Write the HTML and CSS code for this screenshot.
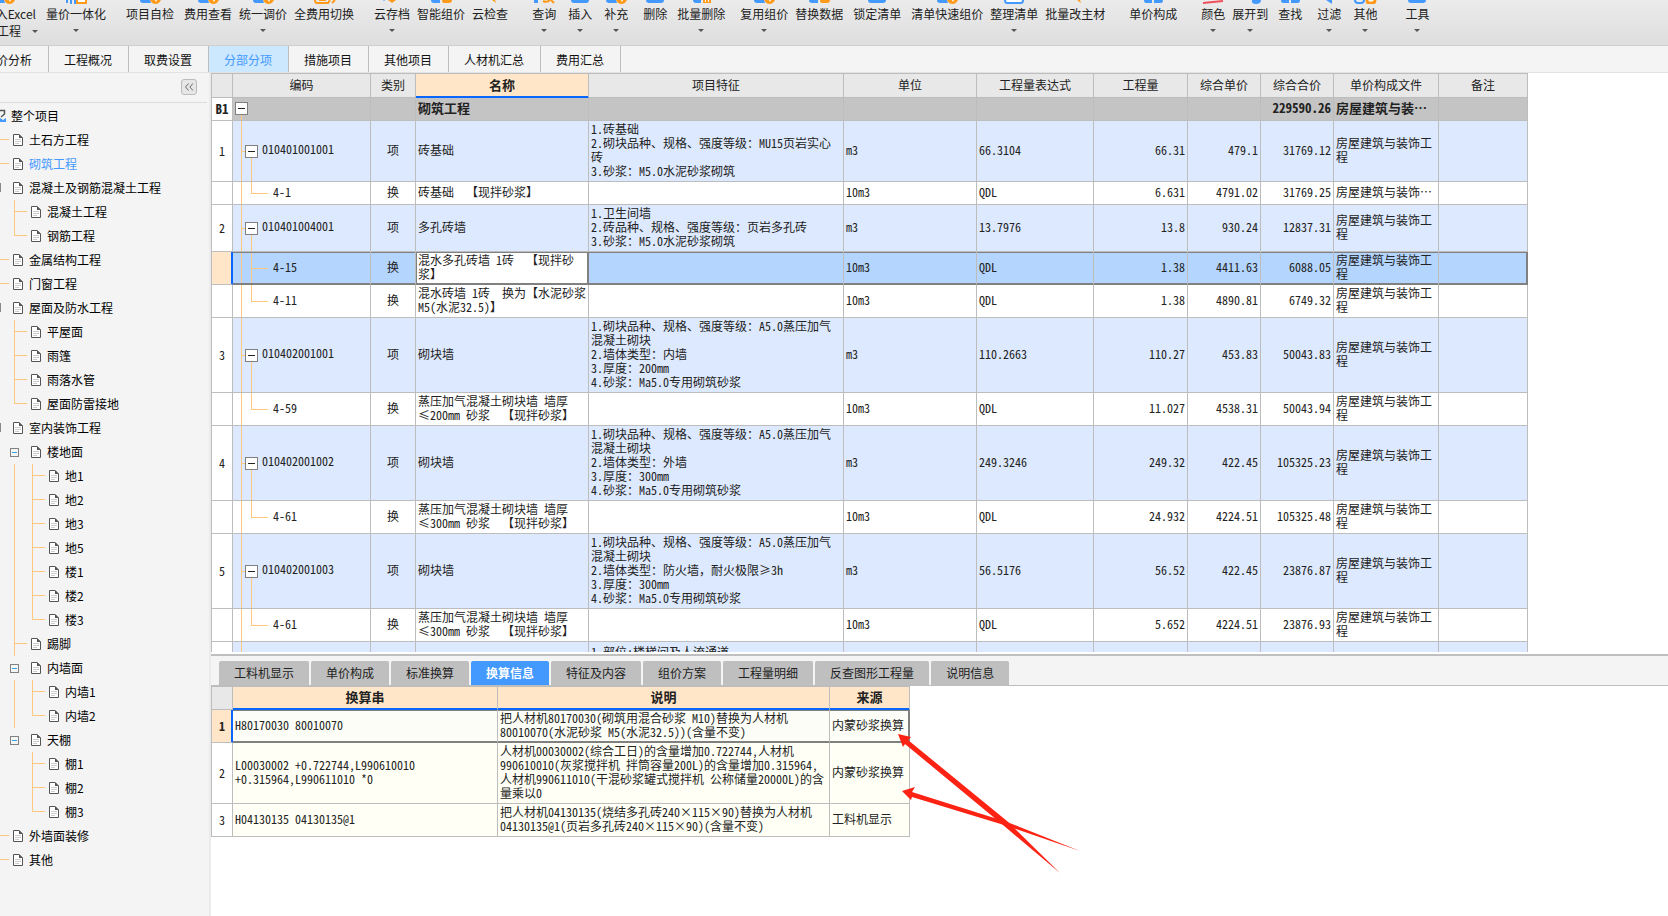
FILE: index.html
```html
<!DOCTYPE html>
<html lang="zh-CN">
<head>
<meta charset="utf-8">
<title>分部分项</title>
<link rel="stylesheet" href="styles.css">
</head>
<body>
<svg class="defs" aria-hidden="true">
  <symbol id="i-doc" viewBox="0 0 10 12"><path d="M.5.5H6L9.500 4V11.500H.5Z" fill="#fff" stroke="#555"/><path d="M6 0L10 4H6Z" fill="#555"/><path d="M2 5.500H8M2 7.500H8M2 9.500H6" stroke="#ccc"/></symbol>
  <symbol id="t-check" viewBox="0 0 24 4"><path d="M2 0H12L13 3H5Q2 3 2 0Z" fill="#4499ff"/><path d="M12 0H23Q21 4 17.500 4T12 0Z" fill="#ff9a1a"/><path d="M17 0H19L18 2Z" fill="#fff"/></symbol>
  <symbol id="t-link" viewBox="0 0 24 4"><path d="M2 0H4V3H2ZM6 0H8V4H6ZM10 0H12V4H10Z" fill="#4499ff"/><path d="M13 0V3H22V0" fill="#fff" stroke="#ff9a1a" stroke-width="2"/></symbol>
  <symbol id="t-swap" viewBox="0 0 24 4"><path d="M3 0Q3 3 5 3H16L18 0" fill="none" stroke="#ff9a1a" stroke-width="2"/><path d="M7 0H14" stroke="#ff9a1a" stroke-width="2"/><path d="M20 3L23 0" stroke="#ff9a1a" stroke-width="2"/></symbol>
  <symbol id="t-cloud" viewBox="0 0 24 4"><path d="M8 0H16L12 3Z" fill="#ff9a1a"/><path d="M3 0H5" stroke="#4499ff"/></symbol>
  <symbol id="t-pair" viewBox="0 0 24 4"><path d="M2 0H11V3H5Q2 3 2 0Z" fill="#4499ff"/><path d="M13 0H23Q23 3 20 3H15Q13 3 13 0Z" fill="#ff9a1a"/></symbol>
  <symbol id="t-spark" viewBox="0 0 24 4"><path d="M14 0H17L18 3Z" fill="#ff9a1a"/></symbol>
  <symbol id="t-find" viewBox="0 0 24 4"><path d="M2 0H6V3H2Z" fill="#4499ff"/><path d="M11 1Q15 3 18 0M19 0L22 3" fill="none" stroke="#ff9a1a" stroke-width="2"/></symbol>
  <symbol id="t-blue" viewBox="0 0 24 4"><path d="M3 0H21Q21 3 18 3H6Q3 3 3 0Z" fill="#4499ff"/></symbol>
  <symbol id="t-trash" viewBox="0 0 24 4"><path d="M4 0H12V3H7Q4 3 4 0Z" fill="#4499ff"/><path d="M14 0H22V3H14Z" fill="#ff9a1a"/><path d="M16.500 0V2M19.500 0V2" stroke="#fff"/></symbol>
  <symbol id="t-box" viewBox="0 0 24 4"><path d="M3 0Q3 3 5 3H19Q21 3 21 0" fill="#fff" stroke="#4499ff" stroke-width="2"/></symbol>
  <symbol id="t-two" viewBox="0 0 24 4"><path d="M3 0H11V3H5Q3 3 3 0ZM13 0H22Q22 3 20 3H13Z" fill="#4499ff"/></symbol>
  <symbol id="t-color" viewBox="0 0 24 4"><path d="M2 3L22 1" stroke="#f0505a" stroke-width="2"/></symbol>
  <symbol id="t-open" viewBox="0 0 24 4"><path d="M14 0H23Q23 4 18 4T14 0Z" fill="#4499ff"/></symbol>
  <symbol id="t-filter" viewBox="0 0 24 4"><path d="M9 0H15V4Z" fill="#4499ff"/></symbol>
  <symbol id="t-other" viewBox="0 0 24 4"><path d="M2 0Q2 3 5 3H8Q11 3 11 0" fill="none" stroke="#4499ff" stroke-width="2"/><path d="M14 0Q14 3 16 3H19Q22 3 22 0" fill="#fff" stroke="#ff9a1a" stroke-width="3"/></symbol>
</svg>

<header class="toolbar">
  <button class="tool first"><svg><use href="#t-check"/></svg><span>导入Excel</span><span class="second">工程<i class="arrow"></i></span></button>
  <button class="tool g-m"><svg><use href="#t-link"/></svg><span>量价一体化</span><i class="arrow"></i></button>
  <button class="tool g-xl"><svg><use href="#t-check"/></svg><span>项目自检</span></button>
  <button class="tool g-m"><svg><use href="#t-check"/></svg><span>费用查看</span></button>
  <button class="tool"><svg><use href="#t-check"/></svg><span>统一调价</span><i class="arrow"></i></button>
  <button class="tool"><svg><use href="#t-swap"/></svg><span>全费用切换</span></button>
  <button class="tool g-xl"><svg><use href="#t-cloud"/></svg><span>云存档</span><i class="arrow"></i></button>
  <button class="tool"><svg><use href="#t-pair"/></svg><span>智能组价</span></button>
  <button class="tool"><svg><use href="#t-spark"/></svg><span>云检查</span></button>
  <button class="tool g-xxl"><svg><use href="#t-find"/></svg><span>查询</span><i class="arrow"></i></button>
  <button class="tool g-n"><svg><use href="#t-blue"/></svg><span>插入</span><i class="arrow"></i></button>
  <button class="tool g-n"><svg><use href="#t-check"/></svg><span>补充</span><i class="arrow"></i></button>
  <button class="tool g-l"><svg><use href="#t-blue"/></svg><span>删除</span></button>
  <button class="tool g-m"><svg><use href="#t-trash"/></svg><span>批量删除</span><i class="arrow"></i></button>
  <button class="tool g-l"><svg><use href="#t-check"/></svg><span>复用组价</span><i class="arrow"></i></button>
  <button class="tool"><svg><use href="#t-pair"/></svg><span>替换数据</span></button>
  <button class="tool g-m"><svg><use href="#t-blue"/></svg><span>锁定清单</span></button>
  <button class="tool g-m"><svg><use href="#t-check"/></svg><span>清单快速组价</span></button>
  <button class="tool"><svg><use href="#t-box"/></svg><span>整理清单</span><i class="arrow"></i></button>
  <button class="tool"><svg><use href="#t-spark"/></svg><span>批量改主材</span></button>
  <button class="tool g-xxl"><svg><use href="#t-two"/></svg><span>单价构成</span></button>
  <button class="tool g-xxl"><svg><use href="#t-color"/></svg><span>颜色</span><i class="arrow"></i></button>
  <button class="tool"><svg><use href="#t-open"/></svg><span>展开到</span><i class="arrow"></i></button>
  <button class="tool g-m"><svg><use href="#t-two"/></svg><span>查找</span></button>
  <button class="tool g-l"><svg><use href="#t-filter"/></svg><span>过滤</span><i class="arrow"></i></button>
  <button class="tool g-n"><svg><use href="#t-other"/></svg><span>其他</span><i class="arrow"></i></button>
  <button class="tool g-3xl"><svg><use href="#t-blue"/></svg><span>工具</span><i class="arrow"></i></button>
</header>

<nav class="tabs">
  <button class="cut">造价分析</button><button>工程概况</button><button>取费设置</button><button class="active">分部分项</button><button>措施项目</button><button>其他项目</button><button>人材机汇总</button><button>费用汇总</button>
</nav>

<main class="main">
  <aside class="sidebar">
    <div class="side-head"><button class="collapse" aria-label="收起"><svg viewBox="0 0 16 16"><path d="M7.500 4L4 8L7.500 12M12.500 4L9 8L12.500 12" fill="none" stroke="#555"/></svg></button></div>
    <ul class="tree">
      <li class="root"><svg class="home" viewBox="0 0 6 14"><path d="M0 1.500H4.500V5L1 8" fill="none" stroke="#555" stroke-width="1.500"/><path d="M0 9L3 11L6 9V13H0Z" fill="#4499ff"/></svg>整个项目</li>
      <li class="l1 stub"><svg><use href="#i-doc"/></svg>土石方工程</li>
      <li class="l1 stub current"><svg><use href="#i-doc"/></svg>砌筑工程</li>
      <li class="l1 edge"><svg><use href="#i-doc"/></svg>混凝土及钢筋混凝土工程</li>
      <li class="l2 mid"><svg><use href="#i-doc"/></svg>混凝土工程</li>
      <li class="l2 end"><svg><use href="#i-doc"/></svg>钢筋工程</li>
      <li class="l1 stub"><svg><use href="#i-doc"/></svg>金属结构工程</li>
      <li class="l1 stub"><svg><use href="#i-doc"/></svg>门窗工程</li>
      <li class="l1 edge"><svg><use href="#i-doc"/></svg>屋面及防水工程</li>
      <li class="l2 mid"><svg><use href="#i-doc"/></svg>平屋面</li>
      <li class="l2 mid"><svg><use href="#i-doc"/></svg>雨篷</li>
      <li class="l2 mid"><svg><use href="#i-doc"/></svg>雨落水管</li>
      <li class="l2 end"><svg><use href="#i-doc"/></svg>屋面防雷接地</li>
      <li class="l1 edge"><svg><use href="#i-doc"/></svg>室内装饰工程</li>
      <li class="l2 open"><button class="fold" aria-label="折叠"></button><svg><use href="#i-doc"/></svg>楼地面</li>
      <li class="l3 mid through"><svg><use href="#i-doc"/></svg>地1</li>
      <li class="l3 mid through"><svg><use href="#i-doc"/></svg>地2</li>
      <li class="l3 mid through"><svg><use href="#i-doc"/></svg>地3</li>
      <li class="l3 mid through"><svg><use href="#i-doc"/></svg>地5</li>
      <li class="l3 mid through"><svg><use href="#i-doc"/></svg>楼1</li>
      <li class="l3 mid through"><svg><use href="#i-doc"/></svg>楼2</li>
      <li class="l3 end through"><svg><use href="#i-doc"/></svg>楼3</li>
      <li class="l2 mid"><svg><use href="#i-doc"/></svg>踢脚</li>
      <li class="l2 open"><button class="fold" aria-label="折叠"></button><svg><use href="#i-doc"/></svg>内墙面</li>
      <li class="l3 mid through"><svg><use href="#i-doc"/></svg>内墙1</li>
      <li class="l3 end through"><svg><use href="#i-doc"/></svg>内墙2</li>
      <li class="l2 open"><button class="fold" aria-label="折叠"></button><svg><use href="#i-doc"/></svg>天棚</li>
      <li class="l3 mid"><svg><use href="#i-doc"/></svg>棚1</li>
      <li class="l3 mid"><svg><use href="#i-doc"/></svg>棚2</li>
      <li class="l3 end"><svg><use href="#i-doc"/></svg>棚3</li>
      <li class="l1 stub"><svg><use href="#i-doc"/></svg>外墙面装修</li>
      <li class="l1 stub"><svg><use href="#i-doc"/></svg>其他</li>
    </ul>
  </aside>

  <section class="content">
    <div class="upper">
      <table class="grid">
        <colgroup><col class="w-num"><col class="w-code"><col class="w-type"><col class="w-name"><col class="w-feat"><col class="w-unit"><col class="w-expr"><col class="w-qty"><col class="w-price"><col class="w-price"><col class="w-file"><col class="w-note"></colgroup>
        <thead><tr><th></th><th>编码</th><th>类别</th><th class="hot">名称</th><th>项目特征</th><th>单位</th><th>工程量表达式</th><th>工程量</th><th>综合单价</th><th>综合合价</th><th>单价构成文件</th><th>备注</th></tr></thead>
        <tbody>
          <tr class="section"><th>B1</th><td class="code top"><button class="node" aria-label="折叠"></button></td><td></td><td>砌筑工程</td><td></td><td></td><td></td><td></td><td></td><td class="n">229590.26</td><td>房屋建筑与装…</td><td></td></tr>
          <tr class="item"><th>1</th><td class="code parent"><button class="node" aria-label="折叠"></button>010401001001</td><td class="c">项</td><td>砖基础</td><td>1.砖基础<br>2.砌块品种、规格、强度等级：MU15页岩实心<br>砖<br>3.砂浆：M5.0水泥砂浆砌筑</td><td>m3</td><td>66.3104</td><td class="n">66.31</td><td class="n">479.1</td><td class="n">31769.12</td><td>房屋建筑与装饰工<br>程</td><td></td></tr>
          <tr><th></th><td class="code leaf">4-1</td><td class="c">换</td><td>砖基础&nbsp;&nbsp;【现拌砂浆】</td><td></td><td>10m3</td><td>QDL</td><td class="n">6.631</td><td class="n">4791.02</td><td class="n">31769.25</td><td>房屋建筑与装饰…</td><td></td></tr>
          <tr class="item"><th>2</th><td class="code parent"><button class="node" aria-label="折叠"></button>010401004001</td><td class="c">项</td><td>多孔砖墙</td><td>1.卫生间墙<br>2.砖品种、规格、强度等级：页岩多孔砖<br>3.砂浆：M5.0水泥砂浆砌筑</td><td>m3</td><td>13.7976</td><td class="n">13.8</td><td class="n">930.24</td><td class="n">12837.31</td><td>房屋建筑与装饰工<br>程</td><td></td></tr>
          <tr class="selected"><th></th><td class="code leaf more">4-15</td><td class="c">换</td><td class="edit">混水多孔砖墙 1砖&nbsp;&nbsp;【现拌砂<br>浆】</td><td></td><td>10m3</td><td>QDL</td><td class="n">1.38</td><td class="n">4411.63</td><td class="n">6088.05</td><td>房屋建筑与装饰工<br>程</td><td></td></tr>
          <tr><th></th><td class="code leaf">4-11</td><td class="c">换</td><td>混水砖墙 1砖&nbsp;&nbsp;换为【水泥砂浆<br>M5(水泥32.5)】</td><td></td><td>10m3</td><td>QDL</td><td class="n">1.38</td><td class="n">4890.81</td><td class="n">6749.32</td><td>房屋建筑与装饰工<br>程</td><td></td></tr>
          <tr class="item"><th>3</th><td class="code parent"><button class="node" aria-label="折叠"></button>010402001001</td><td class="c">项</td><td>砌块墙</td><td>1.砌块品种、规格、强度等级：A5.0蒸压加气<br>混凝土砌块<br>2.墙体类型：内墙<br>3.厚度：200mm<br>4.砂浆：Ma5.0专用砌筑砂浆</td><td>m3</td><td>110.2663</td><td class="n">110.27</td><td class="n">453.83</td><td class="n">50043.83</td><td>房屋建筑与装饰工<br>程</td><td></td></tr>
          <tr><th></th><td class="code leaf">4-59</td><td class="c">换</td><td>蒸压加气混凝土砌块墙 墙厚<br>≤200mm 砂浆&nbsp;&nbsp;【现拌砂浆】</td><td></td><td>10m3</td><td>QDL</td><td class="n">11.027</td><td class="n">4538.31</td><td class="n">50043.94</td><td>房屋建筑与装饰工<br>程</td><td></td></tr>
          <tr class="item"><th>4</th><td class="code parent"><button class="node" aria-label="折叠"></button>010402001002</td><td class="c">项</td><td>砌块墙</td><td>1.砌块品种、规格、强度等级：A5.0蒸压加气<br>混凝土砌块<br>2.墙体类型：外墙<br>3.厚度：300mm<br>4.砂浆：Ma5.0专用砌筑砂浆</td><td>m3</td><td>249.3246</td><td class="n">249.32</td><td class="n">422.45</td><td class="n">105325.23</td><td>房屋建筑与装饰工<br>程</td><td></td></tr>
          <tr><th></th><td class="code leaf">4-61</td><td class="c">换</td><td>蒸压加气混凝土砌块墙 墙厚<br>≤300mm 砂浆&nbsp;&nbsp;【现拌砂浆】</td><td></td><td>10m3</td><td>QDL</td><td class="n">24.932</td><td class="n">4224.51</td><td class="n">105325.48</td><td>房屋建筑与装饰工<br>程</td><td></td></tr>
          <tr class="item"><th>5</th><td class="code parent"><button class="node" aria-label="折叠"></button>010402001003</td><td class="c">项</td><td>砌块墙</td><td>1.砌块品种、规格、强度等级：A5.0蒸压加气<br>混凝土砌块<br>2.墙体类型：防火墙<span class="full">，</span>耐火极限≥3h<br>3.厚度：300mm<br>4.砂浆：Ma5.0专用砌筑砂浆</td><td>m3</td><td>56.5176</td><td class="n">56.52</td><td class="n">422.45</td><td class="n">23876.87</td><td>房屋建筑与装饰工<br>程</td><td></td></tr>
          <tr><th></th><td class="code leaf">4-61</td><td class="c">换</td><td>蒸压加气混凝土砌块墙 墙厚<br>≤300mm 砂浆&nbsp;&nbsp;【现拌砂浆】</td><td></td><td>10m3</td><td>QDL</td><td class="n">5.652</td><td class="n">4224.51</td><td class="n">23876.93</td><td>房屋建筑与装饰工<br>程</td><td></td></tr>
          <tr class="item"><th></th><td class="code top-line"></td><td></td><td></td><td>1.部位:楼梯间及人流通道</td><td></td><td></td><td></td><td></td><td></td><td></td><td></td></tr>
        </tbody>
      </table>
    </div>

    <div class="lower">
      <nav class="subtabs">
        <button>工料机显示</button><button>单价构成</button><button>标准换算</button><button class="active">换算信息</button><button>特征及内容</button><button>组价方案</button><button>工程量明细</button><button>反查图形工程量</button><button>说明信息</button>
      </nav>
      <table class="grid detail">
        <colgroup><col class="w-num"><col class="w-expr2"><col class="w-desc"><col class="w-src"></colgroup>
        <thead><tr><th></th><th class="hot">换算串</th><th class="hot">说明</th><th class="hot">来源</th></tr></thead>
        <tbody>
          <tr class="selected"><th>1</th><td>H80170030 80010070</td><td>把人材机80170030(砌筑用混合砂浆 M10)替换为人材机<br>80010070(水泥砂浆 M5(水泥32.5))(含量不变)</td><td>内蒙砂浆换算</td></tr>
          <tr><th>2</th><td>L00030002 +0.722744,L990610010<br>+0.315964,L990611010 *0</td><td>人材机00030002(综合工日)的含量增加0.722744,人材机<br>990610010(灰浆搅拌机 拌筒容量200L)的含量增加0.315964,<br>人材机990611010(干混砂浆罐式搅拌机 公称储量20000L)的含<br>量乘以0</td><td>内蒙砂浆换算</td></tr>
          <tr><th>3</th><td>H04130135 04130135@1</td><td>把人材机04130135(烧结多孔砖240×115×90)替换为人材机<br>04130135@1(页岩多孔砖240×115×90)(含量不变)</td><td>工料机显示</td></tr>
        </tbody>
      </table>
      <svg class="marks" viewBox="0 0 200 160" aria-hidden="true">
        <g fill="#fc2314">
          <path d="M7 8L20 11L17 14L116 95L169 147L112 99L14 18L12 21Z"/>
          <path d="M11 65L24 61L21 66L116 96L189 125L113 99L21 71L20 74Z"/>
        </g>
      </svg>
    </div>
  </section>
</main>
</body>
</html>
```
FILE: styles.css
```css
* { box-sizing: border-box; }

body {
  margin: 0;
  height: 100vh;
  display: flex;
  flex-direction: column;
  overflow: hidden;
  background: #f4f4f4;
  color: #222;
  font: 12px/14px "Noto Sans CJK SC", sans-serif;
}

button {
  margin: 0;
  padding: 0;
  border: 0;
  background: none;
  color: inherit;
  font: inherit;
}

.defs { display: none; }

/* toolbar */
.toolbar {
  flex: none;
  display: flex;
  height: 46px;
  overflow: hidden;
  background: linear-gradient(#ebebeb, #dedede);
  border-bottom: 1px solid #cfcfcf;
}
.tool {
  flex: none;
  display: flex;
  flex-direction: column;
  align-items: center;
  margin-left: 7px;
  line-height: 20px;
  white-space: nowrap;
}
.tool svg { width: 24px; height: 4px; }
.tool.g-m { margin-left: 10px; }
.tool.g-n { margin-left: 12px; }
.tool.g-l { margin-left: 15px; }
.tool.g-xl { margin-left: 20px; }
.tool.g-xxl { margin-left: 24px; }
.tool.g-3xl { margin-left: 28px; }
.tool.first {
  width: 36px;
  margin-left: 0;
  align-items: flex-end;
}
.tool.first svg { margin-right: 20px; }
.second {
  display: flex;
  align-items: center;
  gap: 11px;
  line-height: 14px;
}
.arrow {
  margin-top: 5px;
  border: 3px solid transparent;
  border-top-color: #555;
  border-bottom: 0;
}
.second .arrow { margin: 0 -2px 0 0; }

/* page tabs */
.tabs {
  flex: none;
  display: flex;
  height: 27px;
  border-bottom: 1px solid #e2e2e2;
}
.tabs button {
  padding: 2px 16px 0 15px;
  border-right: 1px solid #bdbdbd;
  color: #111;
}
.tabs .active { background: #cce8ff; color: #4499ff; }
.tabs .cut {
  width: 49px;
  padding: 2px 16px 0 0;
  display: flex;
  align-items: center;
  justify-content: flex-end;
  overflow: hidden;
  white-space: nowrap;
}

.main { flex: 1; display: flex; min-height: 0; }

/* project tree */
.sidebar {
  flex: none;
  width: 211px;
  border-right: 2px solid #ebebeb;
  color: #000;
}
.side-head {
  display: flex;
  justify-content: flex-end;
  height: 30px;
  margin-right: 2px;
  padding: 6px 10px 0 0;
  border-bottom: 1px solid #dcdcdc;
}
.collapse {
  width: 16px;
  height: 16px;
  border: 1px solid #bbb;
  border-radius: 3px;
  background: #e6e6e6;
}
.collapse svg { display: block; }
.tree { margin: 0; padding: 1px 0 0; list-style: none; }
.tree li {
  --o: linear-gradient(#ffc880, #ffc880);
  display: flex;
  align-items: center;
  height: 24px;
  background-repeat: no-repeat;
  white-space: nowrap;
}
.tree li svg { width: 10px; height: 12px; margin-right: 6px; }
.tree .root .home { width: 6px; height: 14px; margin-right: 5px; }
.tree .l1 { padding-left: 13px; }
.tree .l2 { padding-left: 31px; }
.tree .l3 { padding-left: 49px; }
.tree .current { color: #4499ff; }
.tree .stub { background-image: var(--o); background-size: 9px 1px; background-position: 0 11px; }
.tree .edge { background-image: linear-gradient(#888, #888); background-size: 1px 9px; background-position: 0 7px; }
.tree .l2.mid, .tree .l2.end {
  background-image: var(--o), var(--o);
  background-size: 1px 24px, 13px 1px;
  background-position: 14px 0, 14px 11px;
}
.tree .l2.end { background-size: 1px 12px, 13px 1px; }
.tree .l3.mid, .tree .l3.end {
  background-image: var(--o), var(--o);
  background-size: 1px 24px, 13px 1px;
  background-position: 32px 0, 32px 11px;
}
.tree .l3.end { background-size: 1px 12px, 13px 1px; }
.tree .l3.through {
  background-image: var(--o), var(--o), var(--o);
  background-size: 1px 24px, 13px 1px, 1px 24px;
  background-position: 32px 0, 32px 11px, 14px 0;
}
.tree .l3.end.through { background-size: 1px 12px, 13px 1px, 1px 24px; }
.tree .l2.open { padding-left: 10px; }
.fold {
  width: 9px;
  height: 9px;
  margin-right: 12px;
  border: 1px solid #808080;
  background: linear-gradient(#2fa4dc, #2fa4dc) center / 5px 1px no-repeat;
}

/* work area */
.content {
  flex: 1;
  min-width: 0;
  display: flex;
  flex-direction: column;
  background: #fff;
}
.upper {
  flex: 582 1 0;
  min-height: 0;
  border-bottom: 2px solid #fff;
  display: flex;
  align-items: flex-start;
  overflow: hidden;
  background: #fff;
}
.lower {
  flex: 261 1 0;
  min-height: 0;
  position: relative;
  border-top: 2px solid #bfbfbf;
}

.grid {
  table-layout: fixed;
  width: 0;
  flex: none;
  border-collapse: separate;
  border-spacing: 0;
  border-top: 1px solid #bdbdbd;
  border-left: 1px solid #bdbdbd;
  font-feature-settings: "hwid";
}
.full { font-feature-settings: normal; }
.w-num { width: 21px; }
.w-code { width: 138px; }
.w-type { width: 45px; }
.w-name { width: 173px; }
.w-feat { width: 255px; }
.w-unit { width: 133px; }
.w-expr { width: 117px; }
.w-qty { width: 94px; }
.w-price { width: 73px; }
.w-file { width: 105px; }
.w-note { width: 89px; }
.w-expr2 { width: 265px; }
.w-desc { width: 332px; }
.w-src { width: 80px; }

.grid th, .grid td {
  height: 23px;
  padding: 1px 2px 3px;
  border-right: 1px solid #bdbdbd;
  border-bottom: 1px solid #bdbdbd;
  line-height: 14px;
  white-space: nowrap;
  text-align: left;
  vertical-align: middle;
  font-weight: normal;
}
.grid thead th { height: 24px; background: #e8e8e8; text-align: center; }
.grid thead .hot {
  background: #ffe6c8;
  border-bottom-color: #0a66ff;
  box-shadow: inset 0 -1px #0a66ff;
  font-size: 13px;
  font-weight: bold;
}
.grid tbody th { background: #fff; padding: 2px 0; text-align: center; }
.grid .c { text-align: center; }
.grid .n { text-align: right; }
.grid .item td { background-color: #dde9fe; }
.grid .section td, .grid .section th { font-size: 13px; font-weight: bold; }
.grid .section td { background-color: #c4c4c4; }

/* tree guides inside the code column */
.grid .code {
  --o: linear-gradient(#ffc880, #ffc880);
  padding-left: 34px;
  background-repeat: no-repeat;
}
.grid .top {
  padding-left: 2px;
  background-image: var(--o);
  background-size: 1px 6px;
  background-position: 8px 100%;
}
.grid .top-line { background-image: var(--o); background-size: 1px 100%; background-position: 8px 0; }
.grid .parent {
  padding-left: 12px;
  background-image: var(--o), var(--o), var(--o);
  background-size: 1px 100%, 4px 1px, 1px 50%;
  background-position: 8px 0, 8px 50%, 18px 100%;
}
.grid .leaf {
  padding-left: 40px;
  background-image: var(--o), var(--o), var(--o);
  background-size: 1px 100%, 17px 1px, 1px 50%;
  background-position: 8px 0, 18px 50%, 18px 0;
}
.grid .leaf.more { background-size: 1px 100%, 17px 1px, 1px 100%; }
.node {
  width: 13px;
  height: 13px;
  margin-right: 4px;
  border: 1px solid #808080;
  background: linear-gradient(#222, #222) center / 7px 1px no-repeat #fff;
  vertical-align: middle;
}
.top .node { display: block; }

/* selected row */
.grid .selected th {
  background: #ffe6c8;
  border-right-color: #0a66ff;
  box-shadow: inset -1px 0 #0a66ff;
}
.grid .selected td {
  background-color: #b3d5fe;
  border-bottom-color: #808080;
  box-shadow: inset 0 1px #808080, inset 0 -1px #808080;
}
.grid .selected .edit {
  background: #fff;
  border-right-color: #808080;
  box-shadow: inset 0 0 0 1px #808080;
}
.grid .selected td:last-child {
  border-right-color: #808080;
  box-shadow: inset 0 1px #808080, inset -1px -1px #808080;
}

/* lower pane */
.subtabs {
  display: flex;
  gap: 2px;
  height: 30px;
  padding: 5px 0 0 8px;
  background: #f4f4f4;
  border-bottom: 1px solid #bdbdbd;
}
.subtabs button {
  padding: 0 15px;
  border-radius: 2px 2px 0 0;
  background: #bfbfbf;
}
.subtabs .active { background: #4499ff; color: #fff; font-weight: bold; }
.grid.detail thead th { height: 23px; }
.detail tbody td { background-color: #fffff5; }
.grid.detail .selected th { font-weight: bold; }
.grid.detail .selected td { background-color: #fbfdf6; }
.marks {
  position: absolute;
  left: 680px;
  top: 70px;
  width: 200px;
  height: 160px;
}
```
